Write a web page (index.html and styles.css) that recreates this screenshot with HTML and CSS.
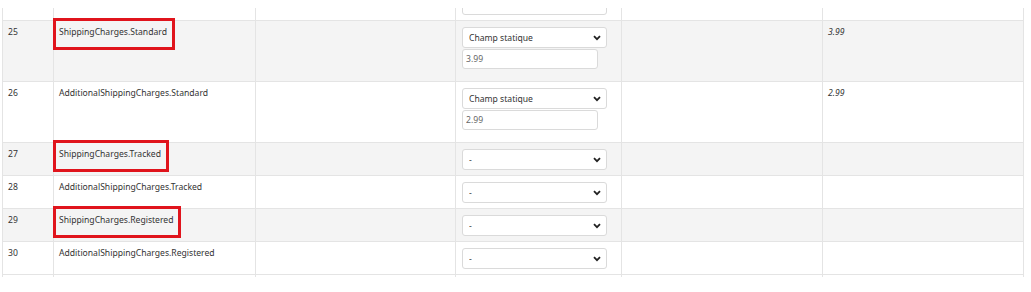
FILE: index.html
```html
<!DOCTYPE html>
<html lang="fr">

<head>
    <meta charset="UTF-8">
    <title>Mapping des champs</title>
    <link rel="stylesheet" href="styles.css">
</head>

<body>
    <div class="viewport">
        <table class="mapping">
            <colgroup>
                <col class="col-num">
                <col class="col-field">
                <col class="col-empty">
                <col class="col-source">
                <col class="col-empty2">
                <col class="col-value">
            </colgroup>
            <tbody>
                <tr>
                    <td></td>
                    <td></td>
                    <td></td>
                    <td>
                        <select class="field-select">
                            <option>-</option>
                        </select>
                    </td>
                    <td></td>
                    <td></td>
                </tr>
                <tr class="striped">
                    <td>25</td>
                    <td><span class="mark">ShippingCharges.Standard</span></td>
                    <td></td>
                    <td>
                        <div class="source-stack">
                            <select class="field-select">
                                <option>Champ statique</option>
                            </select>
                            <input type="text" class="field-input" value="3.99">
                        </div>
                    </td>
                    <td></td>
                    <td class="preview">3.99</td>
                </tr>
                <tr>
                    <td>26</td>
                    <td>AdditionalShippingCharges.Standard</td>
                    <td></td>
                    <td>
                        <div class="source-stack">
                            <select class="field-select">
                                <option>Champ statique</option>
                            </select>
                            <input type="text" class="field-input" value="2.99">
                        </div>
                    </td>
                    <td></td>
                    <td class="preview">2.99</td>
                </tr>
                <tr class="striped">
                    <td>27</td>
                    <td><span class="mark">ShippingCharges.Tracked</span></td>
                    <td></td>
                    <td>
                        <select class="field-select">
                            <option>-</option>
                        </select>
                    </td>
                    <td></td>
                    <td></td>
                </tr>
                <tr>
                    <td>28</td>
                    <td>AdditionalShippingCharges.Tracked</td>
                    <td></td>
                    <td>
                        <select class="field-select">
                            <option>-</option>
                        </select>
                    </td>
                    <td></td>
                    <td></td>
                </tr>
                <tr class="striped">
                    <td>29</td>
                    <td><span class="mark">ShippingCharges.Registered</span></td>
                    <td></td>
                    <td>
                        <select class="field-select">
                            <option>-</option>
                        </select>
                    </td>
                    <td></td>
                    <td></td>
                </tr>
                <tr>
                    <td>30</td>
                    <td>AdditionalShippingCharges.Registered</td>
                    <td></td>
                    <td>
                        <select class="field-select">
                            <option>-</option>
                        </select>
                    </td>
                    <td></td>
                    <td></td>
                </tr>
                <tr class="next-row">
                    <td></td>
                    <td></td>
                    <td></td>
                    <td></td>
                    <td></td>
                    <td></td>
                </tr>
            </tbody>
        </table>
    </div>
</body>

</html>
```

FILE: styles.css
```css
/* Global Styles */
body {
    margin: 0;
    background-color: #fff;
    font-family: 'Noto Sans', 'Open Sans', sans-serif;
    font-size: 8.6px;
    color: #333;
}

/* Visible part of the table */
.viewport {
    margin-top: 8px;
    height: 269px;
    overflow: hidden;
}

/* Mapping Table */
.mapping {
    margin: -21px 0 0 2px;
    width: 1022px;
    table-layout: fixed;
    border-collapse: collapse;
}

.col-num { width: 51px; }
.col-field { width: 202px; }
.col-empty { width: 200px; }
.col-source { width: 166px; }
.col-empty2 { width: 201px; }
.col-value { width: 201px; }

.mapping td {
    border: 1px solid #e4e4e4;
    padding: 6px 5px 5px;
    vertical-align: top;
    line-height: 1.2;
    white-space: nowrap;
}

.mapping tr.striped td {
    background-color: #f4f4f4;
}

.mapping tr.next-row td {
    height: 21px;
}

.preview {
    font-style: italic;
}

/* Source column controls */
.source-stack {
    display: flex;
    flex-direction: column;
    align-items: flex-start;
    gap: 1px;
    padding-bottom: 7px;
}

.field-select {
    display: block;
    width: 145px;
    height: 21px;
    margin: 0 0 0 1px;
    padding: 0 14px 0 6px;
    border: 1px solid #dadada;
    border-radius: 3px;
    background-color: #fff;
    background-image: url("data:image/svg+xml,%3Csvg xmlns='http://www.w3.org/2000/svg' width='8' height='6' viewBox='0 0 8 6'%3E%3Cpolyline points='1,1.2 4,4.2 7,1.2' fill='none' stroke='%23222' stroke-width='1.8'/%3E%3C/svg%3E");
    background-repeat: no-repeat;
    background-position: right 5px center;
    appearance: none;
    -webkit-appearance: none;
    font-family: inherit;
    font-size: 8.6px;
    color: #333;
}

.field-input {
    box-sizing: border-box;
    width: 136px;
    height: 20px;
    margin: 0 0 0 1px;
    padding: 0 3px;
    border: 1px solid #dadada;
    border-radius: 3px;
    font-family: inherit;
    font-size: 8.6px;
    color: #666;
}

/* Highlighted field names */
.mark {
    position: relative;
}

.mark::after {
    content: "";
    position: absolute;
    left: -6px;
    right: -8px;
    top: -8px;
    height: 32px;
    border: 3px solid #e0141c;
    box-sizing: border-box;
}
```
